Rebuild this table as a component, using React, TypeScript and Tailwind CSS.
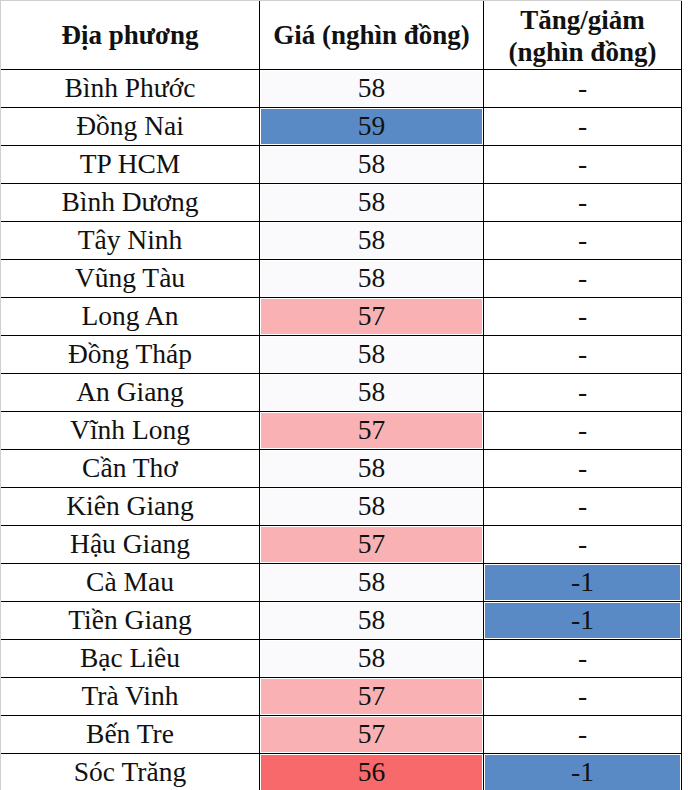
const rows: { name: string; price: string; change: string; priceBg?: string; changeBg?: string }[] = [
  { name: "Bình Phước", price: "58", change: "-" },
  { name: "Đồng Nai", price: "59", change: "-", priceBg: "bg-[#5a8ac6]" },
  { name: "TP HCM", price: "58", change: "-" },
  { name: "Bình Dương", price: "58", change: "-" },
  { name: "Tây Ninh", price: "58", change: "-" },
  { name: "Vũng Tàu", price: "58", change: "-" },
  { name: "Long An", price: "57", change: "-", priceBg: "bg-[#f9b1b4]" },
  { name: "Đồng Tháp", price: "58", change: "-" },
  { name: "An Giang", price: "58", change: "-" },
  { name: "Vĩnh Long", price: "57", change: "-", priceBg: "bg-[#f9b1b4]" },
  { name: "Cần Thơ", price: "58", change: "-" },
  { name: "Kiên Giang", price: "58", change: "-" },
  { name: "Hậu Giang", price: "57", change: "-", priceBg: "bg-[#f9b1b4]" },
  { name: "Cà Mau", price: "58", change: "-1", changeBg: "bg-[#5a8ac6]" },
  { name: "Tiền Giang", price: "58", change: "-1", changeBg: "bg-[#5a8ac6]" },
  { name: "Bạc Liêu", price: "58", change: "-" },
  { name: "Trà Vinh", price: "57", change: "-", priceBg: "bg-[#f9b1b4]" },
  { name: "Bến Tre", price: "57", change: "-", priceBg: "bg-[#f9b1b4]" },
  { name: "Sóc Trăng", price: "56", change: "-1", priceBg: "bg-[#f8696b]", changeBg: "bg-[#5a8ac6]" },
];

function Cell({ text, width, bg }: { text: string; width: string; bg?: string }) {
  return (
    <div className={`${width} h-full shrink-0 border-r border-black p-px`}>
      <div className={`flex h-full items-center justify-center pb-[2px] ${bg ?? ""}`}>{text}</div>
    </div>
  );
}

export default function App() {
  return (
    <div className="h-[790px] w-[688px] overflow-hidden bg-white font-['Liberation_Serif','Times_New_Roman',serif] text-[#111]">
      <div className="w-[682px] border-l border-t border-[#cfcfcf]">
        {/* Header */}
        <div className="flex h-[69px] border-b border-black text-[27px] font-bold leading-[32px]">
          <div className="flex w-[259px] shrink-0 items-center justify-center border-r border-black">
            Địa phương
          </div>
          <div className="flex w-[224px] shrink-0 items-center justify-center border-r border-black">
            Giá (nghìn đồng)
          </div>
          <div className="flex w-[198px] shrink-0 flex-col items-center justify-center border-r border-black pt-[2px]">
            <span>Tăng/giảm</span>
            <span>(nghìn đồng)</span>
          </div>
        </div>

        {/* Rows */}
        {rows.map((r) => (
          <div key={r.name} className="flex h-[38px] border-b border-black text-[27.5px] leading-none">
            <Cell text={r.name} width="w-[259px]" />
            <Cell text={r.price} width="w-[224px]" bg={r.priceBg ?? "bg-[#fafafd]"} />
            <Cell text={r.change} width="w-[198px]" bg={r.changeBg} />
          </div>
        ))}
      </div>
    </div>
  );
}
